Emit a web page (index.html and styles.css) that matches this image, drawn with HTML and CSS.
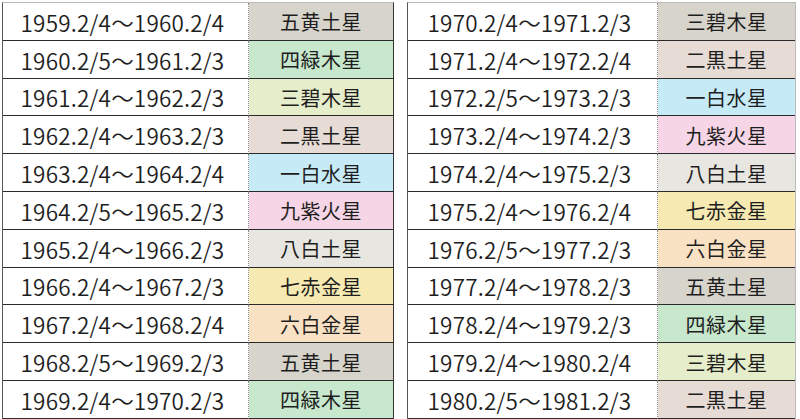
FILE: index.html
```html
<!DOCTYPE html>
<html lang="ja">
<head>
<meta charset="utf-8">
<link rel="stylesheet" href="styles.css">
</head>
<body>
<div class="wrap">
  <div class="tbl left">
    <div class="d">1959.2/4～1960.2/4</div><div class="s c5">五黄土星</div>
    <div class="d">1960.2/5～1961.2/3</div><div class="s c4">四緑木星</div>
    <div class="d">1961.2/4～1962.2/3</div><div class="s c3">三碧木星</div>
    <div class="d">1962.2/4～1963.2/3</div><div class="s c2">二黒土星</div>
    <div class="d">1963.2/4～1964.2/4</div><div class="s c1">一白水星</div>
    <div class="d">1964.2/5～1965.2/3</div><div class="s c9">九紫火星</div>
    <div class="d">1965.2/4～1966.2/3</div><div class="s c8">八白土星</div>
    <div class="d">1966.2/4～1967.2/3</div><div class="s c7">七赤金星</div>
    <div class="d">1967.2/4～1968.2/4</div><div class="s c6">六白金星</div>
    <div class="d">1968.2/5～1969.2/3</div><div class="s c5">五黄土星</div>
    <div class="d last">1969.2/4～1970.2/3</div><div class="s c4 last">四緑木星</div>
  </div>
  <div class="tbl right">
    <div class="d">1970.2/4～1971.2/3</div><div class="s c5">三碧木星</div>
    <div class="d">1971.2/4～1972.2/4</div><div class="s c2">二黒土星</div>
    <div class="d">1972.2/5～1973.2/3</div><div class="s c1">一白水星</div>
    <div class="d">1973.2/4～1974.2/3</div><div class="s c9">九紫火星</div>
    <div class="d">1974.2/4～1975.2/3</div><div class="s c8">八白土星</div>
    <div class="d">1975.2/4～1976.2/4</div><div class="s c7">七赤金星</div>
    <div class="d">1976.2/5～1977.2/3</div><div class="s c6">六白金星</div>
    <div class="d">1977.2/4～1978.2/3</div><div class="s c5">五黄土星</div>
    <div class="d">1978.2/4～1979.2/3</div><div class="s c4">四緑木星</div>
    <div class="d">1979.2/4～1980.2/4</div><div class="s c3">三碧木星</div>
    <div class="d last">1980.2/5～1981.2/3</div><div class="s c2 last">二黒土星</div>
  </div>
</div>
</body>
</html>
```

FILE: styles.css
```css
html, body {
  margin: 0;
  padding: 0;
  background: #fff;
}
.wrap {
  display: flex;
  gap: 13px;
  padding: 2px 0 0 2px;
  width: 800px;
  height: 419px;
  box-sizing: border-box;
}
.tbl {
  display: grid;
  grid-auto-rows: 37.8px;
  border-left: 1.5px solid #555;
  border-right: 1.5px solid #333;
  border-top: 1px solid #bbb;
  color: #1e1e1e;
  font-family: "Noto Sans CJK JP", "Noto Sans", sans-serif;
}
.left { grid-template-columns: 246px 144px; }
.right { grid-template-columns: 250px 137px; border-right: 1px solid #bbb; }
.d, .s {
  display: flex;
  align-items: center;
  justify-content: center;
  border-bottom: 1.5px solid #2a2a2a;
  padding-top: 1px;
  box-sizing: border-box;
}
.d {
  font-size: 22.5px;
  font-weight: 350;
  letter-spacing: 0.2px;
  border-right: 1px dotted #8a8a8a;
  padding-right: 6px;
}
.s {
  font-size: 20px;
  letter-spacing: 0.5px;
}
.c5 { background: #d7d4cb; }
.c4 { background: #c8e8cd; }
.c3 { background: #e5edca; }
.c2 { background: #e6dcd5; }
.c1 { background: #c6ebf6; }
.c9 { background: #f6d5e6; }
.c8 { background: #e8e6e1; }
.c7 { background: #f6eab2; }
.c6 { background: #f9e2c4; }
```
